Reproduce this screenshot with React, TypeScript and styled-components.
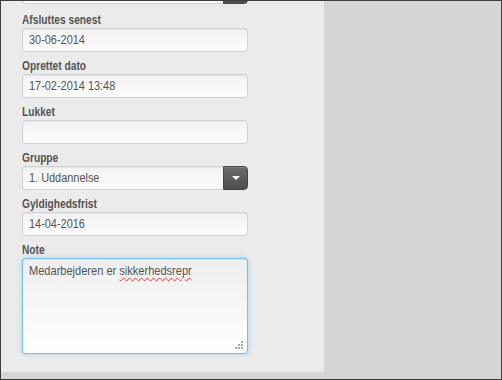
import React from 'react'
import styled, { createGlobalStyle } from 'styled-components'

const GlobalStyle = createGlobalStyle`
  html, body {
    margin: 0;
    padding: 0;
    background: #d6d6d6;
  }
  * {
    box-sizing: border-box;
  }
`

const St = {
  Frame: styled.div`
    width: 502px;
    height: 380px;
    border: 1px solid #3d3d3d;
    background: #d6d6d6;
    overflow: hidden;
    font-family: 'Liberation Sans', Arial, sans-serif;
  `,
  Panel: styled.div`
    width: 323px;
    height: 371px;
    padding-left: 21px;
    background: #ebebeb;
    overflow: hidden;
  `,
  Form: styled.form`
    width: 226px;
    display: flex;
    flex-direction: column;
  `,
  Field: styled.div<{ $first?: boolean }>`
    display: flex;
    flex-direction: column;
    margin-top: ${(props) => (props.$first ? '-21px' : '0')};
    margin-bottom: ${(props) => (props.$first ? '8px' : '6px')};
  `,
  Label: styled.label`
    display: block;
    height: 16px;
    line-height: 16px;
    font-size: 12px;
    font-weight: 700;
    color: #545454;
    white-space: nowrap;
  `,
  // the original renders a narrow sans; squeeze Liberation Sans to match
  Narrow: styled.span<{ $scale?: number }>`
    display: inline-block;
    transform: scaleX(${(props) => props.$scale ?? 0.85});
    transform-origin: left center;
  `,
  Input: styled.div`
    height: 24px;
    padding: 0 6px;
    line-height: 22px;
    font-size: 13px;
    color: #555;
    border: 1px solid #d2d2d2;
    border-radius: 4px;
    background: linear-gradient(to bottom, #f2f2f2, #fcfcfc);
    box-shadow: inset 0 1px 1px rgba(0, 0, 0, 0.06);
    white-space: nowrap;
  `,
  Select: styled.div`
    display: flex;
    height: 24px;
  `,
  SelectValue: styled.div`
    flex: 1;
    padding: 0 6px;
    line-height: 22px;
    font-size: 13px;
    color: #555;
    border: 1px solid #d2d2d2;
    border-right: none;
    border-radius: 4px 0 0 4px;
    background: linear-gradient(to bottom, #f2f2f2, #fcfcfc);
    box-shadow: inset 0 1px 1px rgba(0, 0, 0, 0.06);
    white-space: nowrap;
  `,
  SelectButton: styled.div`
    width: 25px;
    display: flex;
    align-items: center;
    justify-content: center;
    border: 1px solid #474747;
    border-radius: 0 4px 4px 0;
    background: linear-gradient(to bottom, #6b6b6b, #4e4e4e);
    box-shadow: inset 0 1px 0 rgba(255, 255, 255, 0.15);
  `,
  TextArea: styled.div`
    position: relative;
    height: 96px;
    padding: 4px 6px;
    line-height: 16px;
    font-size: 13px;
    color: #555;
    border: 1px solid rgba(82, 168, 236, 0.75);
    border-radius: 4px;
    background: linear-gradient(to bottom, #eeeeee, #ffffff);
    box-shadow: inset 0 1px 1px rgba(0, 0, 0, 0.06), 0 0 5px rgba(82, 168, 236, 0.45);
    white-space: nowrap;
  `,
  Misspelled: styled.span`
    text-decoration: underline wavy #e02020;
    text-decoration-thickness: 1px;
    text-underline-offset: 2px;
  `,
  Grip: styled.svg`
    position: absolute;
    right: 3px;
    bottom: 3px;
  `,
}

const Caret = () => (
  <svg width="8" height="4" viewBox="0 0 8 4">
    <path d="M0 0 L8 0 L4 4 Z" fill="#fff" />
  </svg>
)

const SelectBox = ({ value }: { value: string }) => (
  <St.Select>
    <St.SelectValue>
      <St.Narrow $scale={0.84}>{value}</St.Narrow>
    </St.SelectValue>
    <St.SelectButton>
      <Caret />
    </St.SelectButton>
  </St.Select>
)

const TextField = ({ label, value }: { label: string; value: string }) => (
  <St.Field>
    <St.Label>
      <St.Narrow>{label}</St.Narrow>
    </St.Label>
    <St.Input>
      <St.Narrow $scale={0.84}>{value}</St.Narrow>
    </St.Input>
  </St.Field>
)

export default function App() {
  return (
    <>
      <GlobalStyle />
      <St.Frame>
        <St.Panel>
          <St.Form>
            <St.Field $first>
              <SelectBox value="" />
            </St.Field>
            <TextField label="Afsluttes senest" value="30-06-2014" />
            <TextField label="Oprettet dato" value="17-02-2014 13:48" />
            <TextField label="Lukket" value="" />
            <St.Field>
              <St.Label>
                <St.Narrow>Gruppe</St.Narrow>
              </St.Label>
              <SelectBox value="1. Uddannelse" />
            </St.Field>
            <TextField label="Gyldighedsfrist" value="14-04-2016" />
            <St.Field>
              <St.Label>
                <St.Narrow>Note</St.Narrow>
              </St.Label>
              <St.TextArea>
                <St.Narrow>
                  Medarbejderen er <St.Misspelled>sikkerhedsrepr</St.Misspelled>
                </St.Narrow>
                <St.Grip width="11" height="11" viewBox="0 0 11 11">
                  {[
                    [8, 0],
                    [5, 3],
                    [8, 3],
                    [2, 6],
                    [5, 6],
                    [8, 6],
                  ].map(([x, y]) => (
                    <rect key={`${x}-${y}`} x={x} y={y + 2} width="2" height="2" fill="#a8a8a8" />
                  ))}
                </St.Grip>
              </St.TextArea>
            </St.Field>
          </St.Form>
        </St.Panel>
      </St.Frame>
    </>
  )
}
